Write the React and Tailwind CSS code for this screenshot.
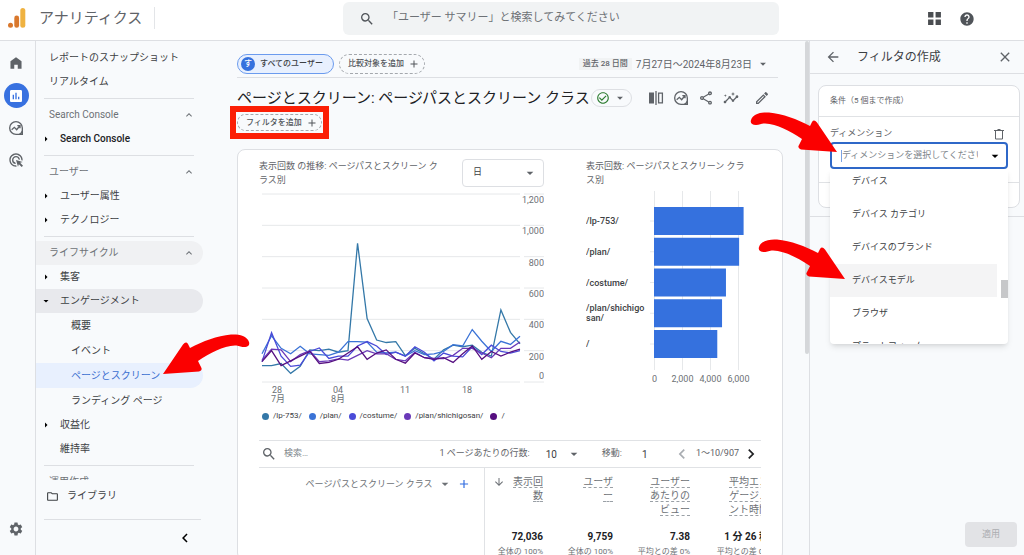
import React, { useState } from 'react';
import clsx from 'clsx';
import {
  MdAdd,
  MdAdsClick,
  MdArrowBack,
  MdArrowDownward,
  MdArrowDropDown,
  MdArrowRight,
  MdAssessment,
  MdCheckCircleOutline,
  MdChevronLeft,
  MdChevronRight,
  MdClose,
  MdHelp,
  MdInsights,
  MdKeyboardArrowUp,
  MdOutlineEdit,
  MdOutlineFolder,
  MdOutlineShare,
  MdSearch,
  MdSettings,
} from 'react-icons/md';

const SERIES = [
  {
    name: '/lp-753/',
    color: '#3478a8',
    values: [105, 105, 118, 55, 100, 205, 200, 210, 190, 200, 885, 405, 268, 252, 258, 168, 215, 180, 145, 205, 235, 225, 235, 190, 165, 460, 317, 243],
  },
  {
    name: '/plan/',
    color: '#3b73d6',
    values: [180, 295, 215, 180, 228, 180, 175, 170, 190, 258, 258, 255, 190, 185, 190, 165, 200, 175, 180, 195, 238, 230, 335, 260, 195, 260, 240, 292],
  },
  {
    name: '/costume/',
    color: '#4a4bd8',
    values: [130, 315, 165, 100, 108, 195, 217, 150, 165, 165, 230, 258, 230, 175, 190, 165, 225, 190, 135, 185, 165, 160, 225, 175, 235, 195, 185, 200],
  },
  {
    name: '/plan/shichigosan/',
    color: '#6a39b8',
    values: [140, 210, 205, 130, 175, 200, 130, 135, 148, 140, 170, 200, 180, 180, 145, 135, 190, 155, 150, 150, 170, 215, 215, 185, 155, 215, 215, 255],
  },
  {
    name: '/',
    color: '#560f80',
    values: [130, 200, 105, 135, 165, 195, 118, 125, 145, 185, 225, 145, 185, 205, 145, 120, 185, 155, 145, 155, 125, 180, 230, 145, 195, 165, 190, 210],
  },
];

const BARS = [
  { label: ['/lp-753/'], value: 6400 },
  { label: ['/plan/'], value: 6080 },
  { label: ['/costume/'], value: 5140 },
  { label: ['/plan/shichigo', 'san/'], value: 4860 },
  { label: ['/'], value: 4520 },
];

const COLUMNS = [
  { lines: ['表示回', '数'], value: '72,036', note: '全体の 100%', sorted: true, width: 'w-[67px]' },
  { lines: ['ユーザ', 'ー'], value: '9,759', note: '全体の 100%', width: 'w-[70px]' },
  { lines: ['ユーザー', 'あたりの', 'ビュー'], value: '7.38', note: '平均との差 0%', width: 'w-[77px]' },
  { lines: ['平均エン', 'ゲージメ', 'ント時間'], value: '1 分 26 秒', note: '平均との差 0%', width: 'w-[79px]' },
];

const DIMENSIONS = ['デバイス', 'デバイス カテゴリ', 'デバイスのブランド', 'デバイスモデル', 'ブラウザ', 'プラットフォーム'];

function ExploreIcon({ className }) {
  return (
    <svg viewBox="0 0 24 24" className={className} fill="none" stroke="currentColor" strokeWidth="2">
      <path d="M12 2.500a9.500 9.500 0 1 0 0 19h9.500V12A9.500 9.500 0 0 0 12 2.500z" />
      <path d="M5.500 14.500l4-3.500 3.500 3.500L17.500 9M14 8.500h4v4" />
      <path d="M17 21.500q3.500-1.500 4.500-5" />
    </svg>
  );
}

function CompareIcon({ className }) {
  return (
    <svg viewBox="0 0 16 16" className={className}>
      <path d="M1 2.500h5v11H1z" fill="currentColor" />
      <path d="M8 1v14M10.600 3.100h3.800v9.800h-3.800z" fill="none" stroke="currentColor" strokeWidth="1.300" />
    </svg>
  );
}

function HomeIcon({ className }) {
  return (
    <svg viewBox="0 0 24 24" className={className} fill="currentColor">
      <path d="M12 2L2.500 9v13H9v-7h6v7h6.500V9z" />
    </svg>
  );
}

function RedArrow({ className }) {
  return (
    <svg viewBox="0 0 96 52" className={clsx('pointer-events-none absolute z-20 h-[52px] w-24', className)} aria-hidden="true">
      <path
        fill="#fb0000"
        d="M6 15C8 8 18 7 24 7.500C38 9 52 14 65 21L67 17Q69 14 72 17.500L92 47L56 44.500Q52 43 54 40L57 34C45 26 32 19 20 18.500C16 18.500 15 20 11 20C7 20 5 18 6 15Z"
      />
    </svg>
  );
}

function Header() {
  return (
    <header className="flex h-[41px] shrink-0 items-center border-b border-[#dddfe3] bg-white">
      <div className="flex w-[343px] items-center pb-1 pl-2">
        <svg viewBox="0 0 18 20" className="h-5 w-[18px]">
          <circle cx="2.500" cy="17.200" r="2.500" fill="#d9782d" />
          <rect x="6.300" y="7.500" width="4.800" height="12.300" rx="2.400" fill="#d9782d" />
          <rect x="12.300" y="0" width="5" height="19.800" rx="2.500" fill="#efb241" />
        </svg>
        <span className="ml-[13px] text-[15px] leading-5 text-[#5f6368]">アナリティクス</span>
        <span className="ml-3 h-[22px] w-px bg-[#e3e5e8]" />
      </div>
      <label className="mb-[3px] flex h-[33px] flex-1 items-center rounded-md bg-[#f1f3f4] pl-4">
        <MdSearch className="size-4 text-[#505459]" />
        <input
          type="search"
          aria-label="検索"
          placeholder="「ユーザー サマリー」と検索してみてください"
          className="ml-3 flex-1 bg-transparent text-[11px] outline-none placeholder:text-[#6d7176]"
        />
      </label>
      <div className="flex w-[245px] items-center justify-end gap-[17px] pr-[49px] pb-[3px]">
        <button aria-label="アプリ">
          <svg viewBox="0 0 14 14" className="size-[15px] fill-[#4a4d51]">
            <path d="M1 1h5v5H1zM8 1h5v5H8zM1 8h5v5H1zM8 8h5v5H8z" />
          </svg>
        </button>
        <button aria-label="ヘルプ">
          <MdHelp className="size-4 text-[#505459]" />
        </button>
      </div>
    </header>
  );
}

function Rail() {
  return (
    <div className="flex w-9 shrink-0 flex-col items-center border-r border-[#dddfe3] pt-[10px] pr-[3px] text-[#5f6368]">
      <button aria-label="ホーム" className="grid size-6 place-items-center">
        <HomeIcon className="size-[14px]" />
      </button>
      <button aria-label="レポート" className="mt-2 grid size-[25px] place-items-center rounded-full bg-[#3871e0] text-white">
        <MdAssessment className="size-4" />
      </button>
      <button aria-label="探索" className="mt-2 grid size-6 place-items-center">
        <ExploreIcon className="size-4" />
      </button>
      <button aria-label="広告" className="mt-2 grid size-6 place-items-center">
        <MdAdsClick className="size-4" />
      </button>
      <button aria-label="管理" className="mt-auto mb-[14px] grid size-6 place-items-center">
        <MdSettings className="size-4" />
      </button>
    </div>
  );
}

function Divider() {
  return <hr className="my-1 mr-[43px] ml-2 shrink-0 border-[#dddfe3]" />;
}

function NavHeading({ children, active }) {
  return (
    <button
      className={clsx(
        'mr-[34px] flex h-6 shrink-0 items-center justify-between rounded-r-full pr-2 pl-[13px] text-[#6d7176]',
        active && 'bg-[#f0f1f3]'
      )}
    >
      {children}
      <MdKeyboardArrowUp className="size-3" />
    </button>
  );
}

function NavItem({ children, arrow, open, bold }) {
  return (
    <a
      href="#"
      className={clsx(
        'mr-[34px] flex h-6 shrink-0 items-center rounded-r-full pl-1 text-[#3c4043]',
        open && 'bg-[#e8e9ed]',
        bold && 'font-medium text-[#202124]'
      )}
    >
      <span className="mr-2 w-3 text-black">
        {arrow && (open ? <MdArrowDropDown className="size-3" /> : <MdArrowRight className="size-3" />)}
      </span>
      {children}
    </a>
  );
}

function NavChild({ children, selected }) {
  return (
    <a
      href="#"
      className={clsx(
        'mr-[34px] flex h-[25px] shrink-0 items-center rounded-r-full pl-[35px]',
        selected ? 'bg-[#e8f0fe] text-[#3b6fd0]' : 'text-[#3c4043]'
      )}
    >
      {children}
    </a>
  );
}

function Sidebar() {
  return (
    <div className="flex w-[201px] shrink-0 flex-col text-[10px] leading-4">
      <nav className="flex min-h-0 flex-1 flex-col overflow-hidden pt-[5px]">
        <a href="#" className="flex h-6 shrink-0 items-center pl-[13px] text-[#3c4043]">レポートのスナップショット</a>
        <a href="#" className="flex h-6 shrink-0 items-center pl-[13px] text-[#3c4043]">リアルタイム</a>
        <Divider />
        <NavHeading>Search Console</NavHeading>
        <NavItem arrow bold>Search Console</NavItem>
        <Divider />
        <NavHeading>ユーザー</NavHeading>
        <NavItem arrow>ユーザー属性</NavItem>
        <NavItem arrow>テクノロジー</NavItem>
        <Divider />
        <NavHeading active>ライフサイクル</NavHeading>
        <NavItem arrow>集客</NavItem>
        <NavItem arrow open>エンゲージメント</NavItem>
        <NavChild>概要</NavChild>
        <NavChild>イベント</NavChild>
        <NavChild selected>ページとスクリーン</NavChild>
        <NavChild>ランディング ページ</NavChild>
        <NavItem arrow>収益化</NavItem>
        <NavItem>維持率</NavItem>
        <Divider />
        <span className="flex h-6 shrink-0 items-center pl-[13px] text-[#6d7176]">運用作成</span>
      </nav>
      <div className="shrink-0">
        <a href="#" className="flex h-8 items-center pl-[10px] text-[#3c4043]">
          <MdOutlineFolder className="mr-2 size-[13px]" />
          ライブラリ
        </a>
        <hr className="mt-[7px] mr-9 ml-2 border-[#dddfe3]" />
        <div className="flex h-[35px] items-center justify-end pr-[43px]">
          <button aria-label="折りたたむ">
            <MdChevronLeft className="size-[18px] text-black" />
          </button>
        </div>
      </div>
    </div>
  );
}

function LineChart() {
  const y = (v) => 190 - (v * 188) / 1200;
  const x = (i) => 3 + (i * 258) / 27;
  const ticks = [1200, 1000, 800, 600, 400, 200, 0];
  const dates = [
    ['28', 18],
    ['04', 79],
    ['11', 146],
    ['18', 208],
  ];
  return (
    <svg viewBox="0 0 285 214" className="h-[214px] w-[285px] fill-[#6d7176] text-[9px]">
      {ticks.map((t) => (
        <g key={t}>
          <path d={`M3 ${y(t)}H261M265 ${y(t)}H285`} stroke="#e6e8ea" />
          <text x="285" y={t === 0 ? y(t) - 3 : y(t) + 9} textAnchor="end">
            {t.toLocaleString('en-US')}
          </text>
        </g>
      ))}
      {SERIES.map((s) => (
        <polyline
          key={s.name}
          points={s.values.map((v, i) => `${x(i)},${y(v)}`).join(' ')}
          fill="none"
          stroke={s.color}
          strokeWidth="1.300"
        />
      ))}
      {dates.map(([d, left]) => (
        <text key={d} x={left} y="201" textAnchor="middle">{d}</text>
      ))}
      <text x="19" y="210" textAnchor="middle">7月</text>
      <text x="79" y="210" textAnchor="middle">8月</text>
    </svg>
  );
}

function BarChart() {
  const scale = 28 / 2000;
  return (
    <svg viewBox="0 0 176 200" className="h-[200px] w-44 text-[9px]">
      {[0, 2000, 4000, 6000].map((t) => (
        <g key={t}>
          <path d={`M${68.5 + t * scale} 4V183`} stroke="#e6e8ea" />
          <text x={68.5 + t * scale} y="195" textAnchor="middle" fill="#6d7176">
            {t.toLocaleString('en-US')}
          </text>
        </g>
      ))}
      {BARS.map((b, i) => {
        const top = 20 + (i * 123) / 4;
        return (
          <g key={i}>
            <path d={`M64 ${top + 14}h4`} stroke="#e6e8ea" />
            <rect x="68" y={top} width={b.value * scale} height="28" fill="#3571de" />
            {b.label.map((line, n) => (
              <text key={line} x="0" y={top + 17 + n * 10 - (b.label.length - 1) * 5} fill="#3c4043" fontWeight="500">
                {line}
              </text>
            ))}
          </g>
        );
      })}
    </svg>
  );
}

function Toolbar() {
  return (
    <div className="flex h-[28px] items-center border-y border-[#e0e2e5] text-[9px] text-[#5f6368]">
      <MdSearch className="ml-[2px] size-4" />
      <input type="search" aria-label="表を検索" placeholder="検索…" className="ml-[7px] min-w-0 flex-1 outline-none placeholder:text-[#80868b]" />
      <label htmlFor="rows">1 ページあたりの行数:</label>
      <span className="relative ml-4 flex items-center">
        <select id="rows" className="w-8 appearance-none text-[10px] text-[#3c4043] outline-none">
          <option>10</option>
        </select>
        <MdArrowDropDown className="pointer-events-none absolute -right-1 size-4" />
      </span>
      <label htmlFor="goto" className="ml-6">移動:</label>
      <input id="goto" defaultValue="1" className="ml-5 w-[30px] text-[10px] text-[#3c4043] outline-none" />
      <button aria-label="前へ" className="text-[#a9adb2]">
        <MdChevronLeft className="size-5" />
      </button>
      <span className="ml-1 text-[9px]">1～10/907</span>
      <button aria-label="次へ" className="ml-[2px] text-[#202124]">
        <MdChevronRight className="size-5" />
      </button>
    </div>
  );
}

function DataTable() {
  return (
    <div className="overflow-hidden">
      <table className="w-full table-fixed text-right text-[#6d7176]">
        <thead>
          <tr className="align-top text-[10px] leading-[14px]">
            <th className="w-[225px] border-r border-[#e0e2e5] pt-2 pr-[13px] font-normal">
              <span className="flex items-center justify-end">
                <button className="flex items-center text-[9px]">
                  ページパスとスクリーン クラス
                  <MdArrowDropDown className="ml-1 size-4" />
                </button>
                <button aria-label="ディメンションを追加" className="ml-1">
                  <MdAdd className="size-[14px] text-[#2f6be0]" />
                </button>
              </span>
            </th>
            {COLUMNS.map((c) => (
              <th key={c.lines[0]} className={clsx(c.width, 'relative pt-[7px] pr-2 font-normal whitespace-nowrap')}>
                {c.sorted && <MdArrowDownward className="absolute top-2 left-2 size-3" />}
                <span className="border-b border-dashed border-[#9aa0a6]">
                  {c.lines.map((line, i) => (
                    <React.Fragment key={line}>
                      {i > 0 && <br />}
                      {line}
                    </React.Fragment>
                  ))}
                </span>
              </th>
            ))}
          </tr>
        </thead>
        <tbody>
          <tr>
            <td className="border-r border-[#e0e2e5]" />
            {COLUMNS.map((c) => (
              <td key={c.value} className="pt-[13px] pr-2 whitespace-nowrap">
                <span className="block text-[10px] leading-[14px] font-bold text-[#202124]">{c.value}</span>
                <span className="block text-[8px] leading-4">{c.note}</span>
              </td>
            ))}
          </tr>
        </tbody>
      </table>
    </div>
  );
}

function Report() {
  return (
    <main className="flex min-w-0 flex-1">
      <div className="min-w-0 flex-1 pt-[13px]">
        <div className="mr-[27px] flex items-start border-b border-[#dddfe3] pb-[3px]">
          <button className="flex h-5 items-center rounded-full border border-[#6b9bee] bg-[#e8f0fe] pr-[10px] pl-[3px] text-[8px] font-medium text-[#3c4043]">
            <span className="mr-[5px] grid size-[14px] place-items-center rounded-full bg-[#3571de] text-white">す</span>
            すべてのユーザー
          </button>
          <button className="ml-[5px] flex h-5 items-center rounded-full border border-dashed border-[#a4a8ad] pr-1 pl-2 text-[8px] font-medium text-[#505459]">
            比較対象を追加
            <MdAdd className="ml-1 size-3" />
          </button>
          <button className="ml-auto flex h-5 items-center text-[#5f6368]">
            <span className="bg-[#f1f3f4] px-1 text-[8px] font-medium">過去 28 日間</span>
            <span className="ml-1 text-[10px]">7月27日～2024年8月23日</span>
            <MdArrowDropDown className="mr-2 ml-1 size-[14px]" />
          </button>
        </div>

        <div className="mr-[35px] flex h-9 items-center pt-1">
          <h1 className="text-[15px] whitespace-nowrap text-[#202124]">ページとスクリーン: ページパスとスクリーン クラス</h1>
          <button aria-label="データの状態" className="ml-px flex h-[18px] items-center rounded-full border border-[#dddfe3] px-1 text-[#5f6368]">
            <MdCheckCircleOutline className="size-[14px] text-[#2e7d32]" />
            <MdArrowDropDown className="ml-[3px] size-[14px]" />
          </button>
          <div className="ml-auto flex items-center gap-[9px] text-[#5f6368]">
            <button aria-label="比較"><CompareIcon className="size-4" /></button>
            <button aria-label="探索"><ExploreIcon className="size-4" /></button>
            <button aria-label="共有"><MdOutlineShare className="size-4" /></button>
            <button aria-label="インサイト"><MdInsights className="size-4" /></button>
            <button aria-label="編集" className="ml-[6px]"><MdOutlineEdit className="size-4" /></button>
          </div>
        </div>

        <div className="relative w-[85px]">
          <button className="flex h-[17px] w-full items-center rounded-full border border-dashed border-[#a4a8ad] pl-2 text-[8px] font-medium whitespace-nowrap text-[#505459]">
            フィルタを追加
            <MdAdd className="ml-1 size-3" />
          </button>
          <span className="pointer-events-none absolute -inset-x-[7px] -inset-y-2 border-[6px] border-[#fb1f06]" />
        </div>

        <section className="mt-[18px] mr-[22px] rounded-lg border border-[#dddfe3] bg-white px-[21px] pt-[9px]">
          <div className="flex">
            <div className="w-[285px]">
              <div className="flex items-start justify-between">
                <h2 className="w-[196px] text-[9px] leading-[14px] text-[#5f6368]">
                  表示回数 の推移: ページパスとスクリーン ク<br />ラス別
                </h2>
                <span className="relative flex items-center">
                  <select aria-label="期間の単位" className="h-7 w-[82px] appearance-none rounded border border-[#dddfe3] pl-[10px] text-[9px] text-[#3c4043]">
                    <option>日</option>
                  </select>
                  <MdArrowDropDown className="pointer-events-none absolute right-[6px] size-4 text-[#5f6368]" />
                </span>
              </div>
              <div className="mt-[5px]">
                <LineChart />
              </div>
              <ul className="mt-1 ml-[3px] flex gap-[7px] text-[8px] leading-3 text-[#3c4043]">
                {SERIES.map((s) => (
                  <li key={s.name} className="flex items-center gap-1">
                    <span className="size-[7px] rounded-full" style={{ background: s.color }} />
                    {s.name}
                  </li>
                ))}
              </ul>
            </div>
            <div className="ml-[42px] flex-1">
              <h2 className="text-[9px] leading-[14px] text-[#5f6368]">
                表示回数: ページパスとスクリーン クラ<br />ス別
              </h2>
              <BarChart />
            </div>
          </div>
          <div className="mt-[18px]">
            <Toolbar />
            <DataTable />
          </div>
        </section>
      </div>
      <span className="h-[313px] w-1 shrink-0 rounded-full bg-[#d5d7da]" />
    </main>
  );
}

function FilterPanel() {
  const [active, setActive] = useState('デバイスモデル');

  return (
    <aside className="flex w-[215px] shrink-0 flex-col border-l border-[#dddfe3]">
      <div className="flex h-[33px] shrink-0 items-center border-b border-[#dddfe3] pr-[11px] pl-[15px] text-[#5f6368]">
        <button aria-label="戻る"><MdArrowBack className="size-4" /></button>
        <h2 className="ml-4 text-[12px] text-[#3c4043]">フィルタの作成</h2>
        <button aria-label="閉じる" className="ml-auto"><MdClose className="size-4" /></button>
      </div>

      <div className="border-b border-[#dddfe3] pt-[11px] pr-1 pb-2 pl-2">
        <div className="rounded-lg border border-[#dddfe3] bg-white">
          <p className="flex h-[31px] items-center border-b border-[#e0e2e5] pl-[11px] text-[8px] text-[#5f6368]">
            条件（5 個まで作成）
          </p>
          <div className="h-[66px] border-b border-[#e0e2e5] px-[11px] pt-2">
            <div className="flex h-[17px] items-center justify-between text-[9px] text-[#5f6368]">
              <label htmlFor="dimension">ディメンション</label>
              <button aria-label="削除" className="mr-[3px]">
                <svg viewBox="0 0 12 12" className="size-3" fill="none" stroke="currentColor">
                  <path d="M2.500 2.500v8.500h7V2.500M1 2.500h10M4.500 1.500h3" />
                </svg>
              </button>
            </div>
            <div className="relative">
              <div className="flex h-[27px] items-center rounded border-2 border-[#2f68c8] bg-white pl-[9px]">
                <span className="h-3 w-px bg-[#7ba2e2]" />
                <input
                  id="dimension"
                  placeholder="ディメンションを選択してください"
                  className="min-w-0 flex-1 text-[9px] outline-none placeholder:text-[#80868b]"
                />
                <MdArrowDropDown className="mr-[3px] ml-[9px] size-4 text-black" />
              </div>
              <ul
                role="listbox"
                aria-label="ディメンション"
                className="absolute inset-x-0 top-full z-10 h-[175px] overflow-hidden rounded-b bg-white shadow-md"
              >
                {DIMENSIONS.map((d) => (
                  <li key={d} role="option" aria-selected={d === active} className="mr-[11px] first:-mt-1">
                    <button
                      onClick={() => setActive(d)}
                      className={clsx('h-[33px] w-full pl-[22px] text-left text-[9px] text-[#3c4043]', d === active && 'bg-[#f4f4f5]')}
                    >
                      {d}
                    </button>
                  </li>
                ))}
                <span className="absolute top-[111px] right-0 h-[18px] w-[7px] bg-[#c6c7c9]" />
              </ul>
            </div>
          </div>
          <div className="h-6" />
        </div>
      </div>

      <button disabled className="mt-auto mr-[7px] mb-2 h-[25px] w-[52px] self-end rounded-sm bg-[#e2e3e6] text-[9px] text-[#abadb1]">
        適用
      </button>
    </aside>
  );
}

export default function App() {
  return (
    <div
      lang="ja"
      className="relative flex h-screen flex-col overflow-hidden bg-[#f8fafc] font-['Roboto','Noto_Sans_CJK_JP',sans-serif]"
    >
      <Header />
      <div className="flex min-h-0 flex-1">
        <Rail />
        <Sidebar />
        <Report />
        <FilterPanel />
      </div>

      <RedArrow className="top-[105px] right-[183px]" />
      <RedArrow className="top-[232px] right-[175px]" />
      <RedArrow className="top-[327px] left-[159px] -scale-x-100" />
    </div>
  );
}
